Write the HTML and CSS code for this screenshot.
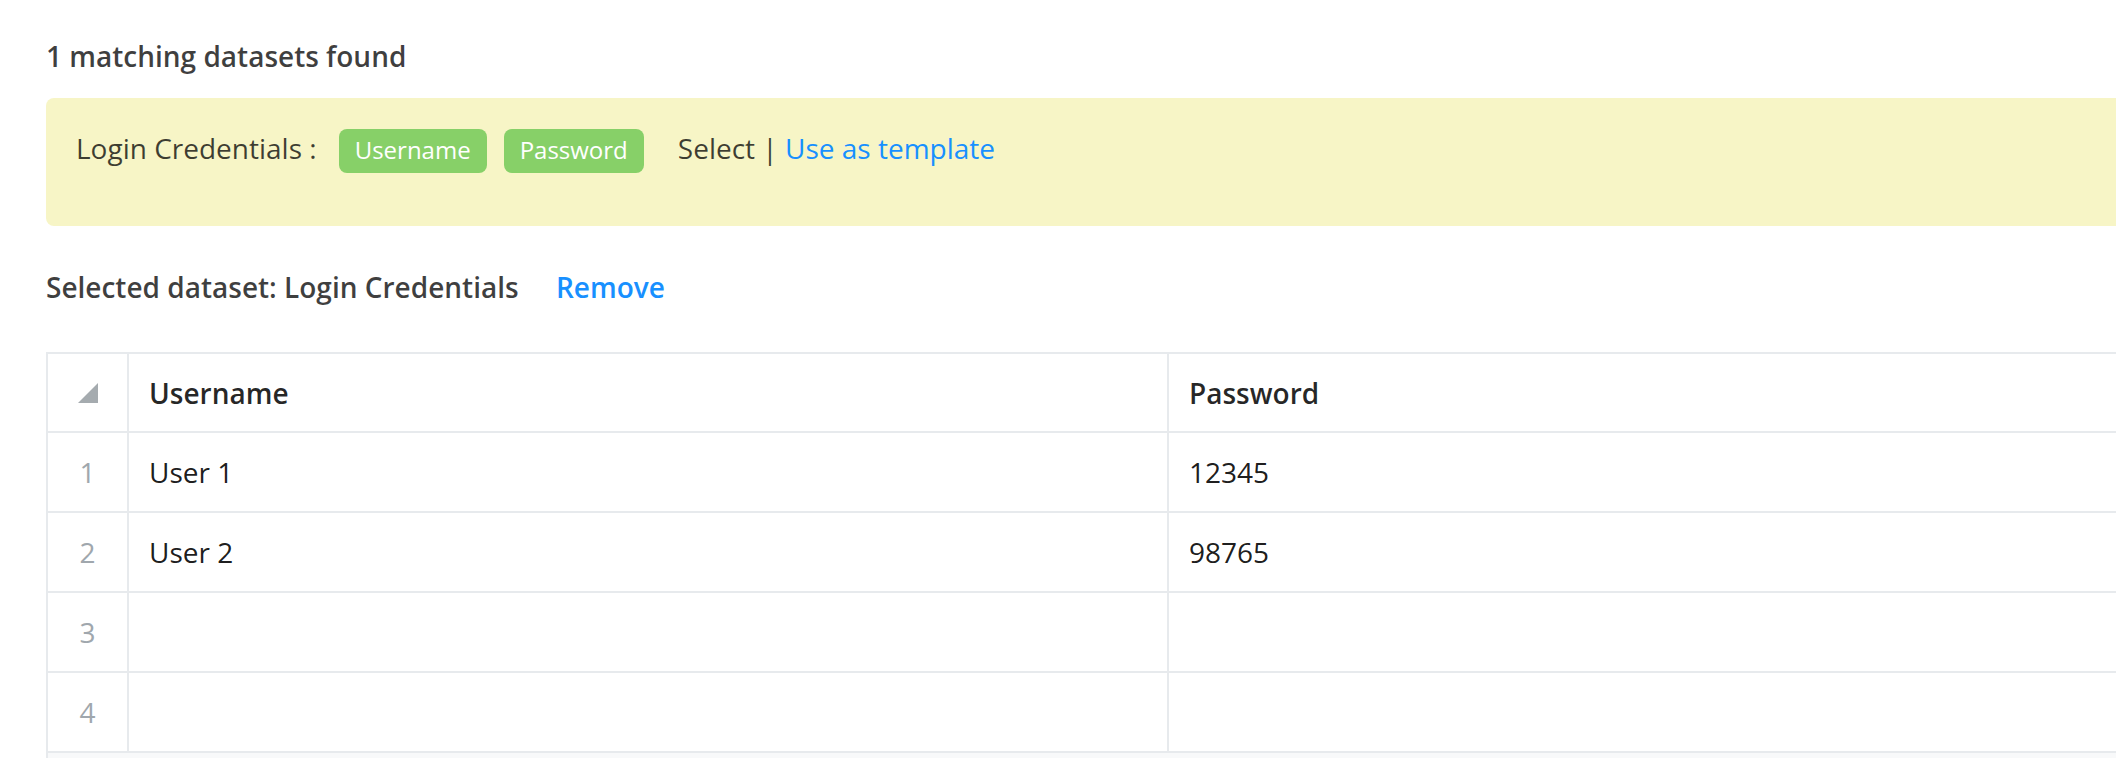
FILE: index.html
```html
<!DOCTYPE html>
<html lang="en">
<head>
    <meta charset="UTF-8">
    <meta name="viewport" content="width=device-width, initial-scale=1.0">
    <title>Datasets</title>
    <link rel="stylesheet" href="styles.css">
</head>
<body>
    <div class="page">
        <h2 class="result-count">1 matching datasets found</h2>

        <div class="dataset-list">
            <div class="dataset-item">
                <span class="dataset-name">Login Credentials :</span>
                <span class="tag">Username</span>
                <span class="tag">Password</span>
                <span class="dataset-actions">
                    Select | <a href="#" class="link">Use as template</a>
                </span>
            </div>
        </div>

        <div class="selected">
            <span class="selected-label">Selected dataset: Login Credentials</span>
            <a href="#" class="link remove">Remove</a>
        </div>

        <div class="sheet">
            <div class="sheet-row sheet-head">
                <div class="cell row-num">
                    <svg width="20" height="20" viewBox="0 0 20 20"><polygon points="20,0 20,20 0,20" fill="#a5abaf"/></svg>
                </div>
                <div class="cell">Username</div>
                <div class="cell">Password</div>
            </div>
            <div class="sheet-row">
                <div class="cell row-num">1</div>
                <div class="cell">User 1</div>
                <div class="cell">12345</div>
            </div>
            <div class="sheet-row">
                <div class="cell row-num">2</div>
                <div class="cell">User 2</div>
                <div class="cell">98765</div>
            </div>
            <div class="sheet-row">
                <div class="cell row-num">3</div>
                <div class="cell"></div>
                <div class="cell"></div>
            </div>
            <div class="sheet-row">
                <div class="cell row-num">4</div>
                <div class="cell"></div>
                <div class="cell"></div>
            </div>
            <div class="sheet-footer"></div>
        </div>
    </div>
</body>
</html>
```

FILE: styles.css
```css
html, body {
    margin: 0;
    overflow: hidden;
}

body {
    font-family: "Open Sans", "Noto Sans", sans-serif;
    font-size: 28px;
    color: rgba(0, 0, 0, 0.75);
    background: #fff;
}

.page {
    padding: 37px 0 0 46px;
    width: 2400px;
}

.result-count {
    margin: 0 0 23px;
    font-size: 28px;
    font-weight: 600;
    line-height: normal;
}

.dataset-list {
    background: #f7f5c6;
    border-radius: 8px 0 0 8px;
    padding: 31px 31px 53px 30px;
}

.dataset-item {
    display: flex;
    align-items: baseline;
}

.dataset-name {
    margin-right: 22px;
}

.tag {
    background: #87d068;
    color: #fff;
    font-size: 24px;
    line-height: 36px;
    padding: 3px 16px 5px;
    border-radius: 8px;
    margin-right: 17px;
}

.dataset-actions {
    margin-left: 17px;
}

.link {
    color: #1890ff;
    text-decoration: none;
}

.selected {
    margin-top: 42px;
    font-weight: 600;
}

.remove {
    margin-left: 30px;
}

.sheet {
    margin-top: 46px;
    border-top: 2px solid #e7eaed;
    border-left: 2px solid #e7eaed;
    color: rgba(0, 0, 0, 0.9);
}

.sheet-row {
    display: grid;
    grid-template-columns: 81px 1040px 1040px;
    height: 80px;
}

.sheet-head {
    height: 79px;
    font-weight: 600;
    color: rgba(0, 0, 0, 0.85);
}

.cell {
    box-sizing: border-box;
    border-right: 2px solid #e7eaed;
    border-bottom: 2px solid #e7eaed;
    padding: 0 20px;
    display: flex;
    align-items: center;
}

.row-num {
    justify-content: center;
    padding: 0;
    color: #a0a7ad;
}

.sheet-footer {
    height: 40px;
    background: #f8f9fa;
}
```
